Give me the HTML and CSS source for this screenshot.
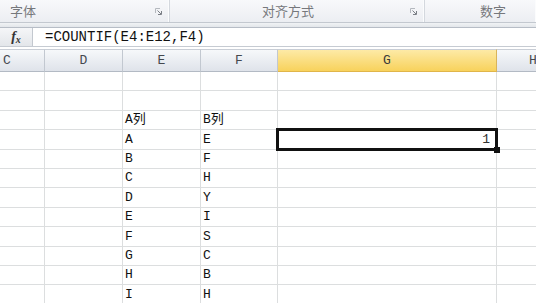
FILE: index.html
```html
<!doctype html>
<html lang="zh-CN">

<head>
    <meta charset="utf-8">
    <title>COUNTIF</title>
    <link rel="stylesheet" href="styles.css">
</head>

<body>
    <div class="ribbon">
        <div class="group group-font">
            <span class="group-label">字体</span>
            <svg class="launcher" width="7" height="7" viewBox="0 0 7 7">
                <path d="M0.5 5V0.5H5" fill="none" stroke="#b4b8be" />
                <path d="M2.5 2.5L6 6M6.5 3V6.5H3" fill="none" stroke="#7b7f86" />
            </svg>
        </div>
        <div class="group group-align">
            <span class="group-label">对齐方式</span>
            <svg class="launcher" width="7" height="7" viewBox="0 0 7 7">
                <path d="M0.5 5V0.5H5" fill="none" stroke="#b4b8be" />
                <path d="M2.5 2.5L6 6M6.5 3V6.5H3" fill="none" stroke="#7b7f86" />
            </svg>
        </div>
        <div class="group group-number">
            <span class="group-label">数字</span>
        </div>
    </div>
    <div class="ribbon-edge"></div>

    <div class="formula-bar">
        <div class="fx"><i>f</i><span class="fx-x">x</span></div>
        <div class="formula">=COUNTIF(E4:E12,F4)</div>
    </div>
    <div class="bar-gap"></div>

    <div class="sheet">
        <div class="col-head col-c">C</div>
        <div class="col-head">D</div>
        <div class="col-head">E</div>
        <div class="col-head">F</div>
        <div class="col-head col-active">G</div>
        <div class="col-head col-h">H</div>

        <div class="cell"></div><div class="cell"></div><div class="cell"></div><div class="cell"></div><div class="cell"></div><div class="cell"></div>
        <div class="cell"></div><div class="cell"></div><div class="cell"></div><div class="cell"></div><div class="cell"></div><div class="cell"></div>
        <div class="cell"></div><div class="cell"></div><div class="cell">A列</div><div class="cell">B列</div><div class="cell"></div><div class="cell"></div>
        <div class="cell"></div><div class="cell"></div><div class="cell">A</div><div class="cell">E</div><div class="cell cell-num selected">1</div><div class="cell"></div>
        <div class="cell"></div><div class="cell"></div><div class="cell">B</div><div class="cell">F</div><div class="cell"></div><div class="cell"></div>
        <div class="cell"></div><div class="cell"></div><div class="cell">C</div><div class="cell">H</div><div class="cell"></div><div class="cell"></div>
        <div class="cell"></div><div class="cell"></div><div class="cell">D</div><div class="cell">Y</div><div class="cell"></div><div class="cell"></div>
        <div class="cell"></div><div class="cell"></div><div class="cell">E</div><div class="cell">I</div><div class="cell"></div><div class="cell"></div>
        <div class="cell"></div><div class="cell"></div><div class="cell">F</div><div class="cell">S</div><div class="cell"></div><div class="cell"></div>
        <div class="cell"></div><div class="cell"></div><div class="cell">G</div><div class="cell">C</div><div class="cell"></div><div class="cell"></div>
        <div class="cell"></div><div class="cell"></div><div class="cell">H</div><div class="cell">B</div><div class="cell"></div><div class="cell"></div>
        <div class="cell"></div><div class="cell"></div><div class="cell">I</div><div class="cell">H</div><div class="cell"></div><div class="cell"></div>
    </div>
</body>

</html>
```

FILE: styles.css
```css
* {
    margin: 0;
    padding: 0;
    box-sizing: border-box;
}

body {
    width: 536px;
    height: 303px;
    overflow: hidden;
    background: #fff;
    font-family: "Liberation Mono", "Noto Sans CJK SC", monospace;
    color: #111;
}

/* ribbon group captions */
.ribbon {
    display: flex;
    height: 23px;
    background: linear-gradient(#f8f9fb, #eceef2);
    border-bottom: 1px solid #c3c8cf;
}

.group {
    display: flex;
    align-items: center;
    border-right: 1px solid #d4d8de;
    box-shadow: inset -1px 0 0 #fbfcfd;
}

.group-label {
    font-family: "Noto Sans CJK SC", sans-serif;
    font-size: 13px;
    color: #76787c;
    line-height: 22px;
}

.launcher {
    margin-left: auto;
}

.group-font {
    width: 170px;
    padding: 0 7px 0 10px;
}

.group-align {
    width: 255px;
    padding: 0 7px 0 92px;
}

.group-number {
    flex: 1;
    padding-left: 55px;
    border-right: none;
}

.ribbon-edge {
    height: 5px;
    background: linear-gradient(#f1f3f5, #e3e6ea);
    border-bottom: 1px solid #b7bdc6;
}

/* formula bar */
.formula-bar {
    display: flex;
    height: 19px;
    border-bottom: 1px solid #c6cbd2;
}

.fx {
    width: 33px;
    display: flex;
    align-items: center;
    justify-content: center;
    background: linear-gradient(#f5f6f8, #e3e6ea);
    border-right: 1px solid #c3c8cf;
    font-family: "Liberation Serif", serif;
    font-weight: bold;
    font-size: 14px;
    color: #333;
}

.fx-x {
    font-style: italic;
    font-size: 10px;
    margin-top: 4px;
}

.formula {
    flex: 1;
    padding-left: 12px;
    font-size: 14px;
    line-height: 18px;
    color: #111;
}

.bar-gap {
    height: 2px;
}

/* worksheet */
.sheet {
    display: grid;
    grid-template-columns: 45px 78px 78px 77px 219px 1fr;
    grid-template-rows: 23px repeat(12, 19.4px);
}

.col-head {
    display: flex;
    align-items: center;
    justify-content: center;
    background: linear-gradient(#f6f8fa, #dfe3ea);
    border-top: 1px solid #c9ced6;
    border-right: 1px solid #c2c8d0;
    border-bottom: 1px solid #b3bac4;
    font-size: 13px;
    color: #44484e;
}

.col-c {
    justify-content: flex-start;
    padding-left: 3px;
}

.col-h {
    justify-content: flex-start;
    padding-left: 32px;
}

.col-active {
    background: linear-gradient(#fdeaa6, #f8d25c);
    border-bottom-color: #e0b54a;
    border-right-color: #d9b45a;
    color: #3a3a3a;
}

.cell {
    display: flex;
    align-items: flex-end;
    padding: 0 2px 1px;
    border-right: 1px solid #dcdedf;
    border-bottom: 1px solid #dcdedf;
    font-size: 13px;
    line-height: 16px;
    white-space: nowrap;
}

.cell-num {
    justify-content: flex-end;
    padding-right: 6px;
    color: #333;
}

.selected {
    position: relative;
}

.selected::before {
    content: "";
    position: absolute;
    top: -2px;
    left: -2px;
    right: -2px;
    bottom: -2px;
    border: 3px solid #111;
}

.selected::after {
    content: "";
    position: absolute;
    right: -4px;
    bottom: -4px;
    width: 6px;
    height: 6px;
    background: #111;
}
```
